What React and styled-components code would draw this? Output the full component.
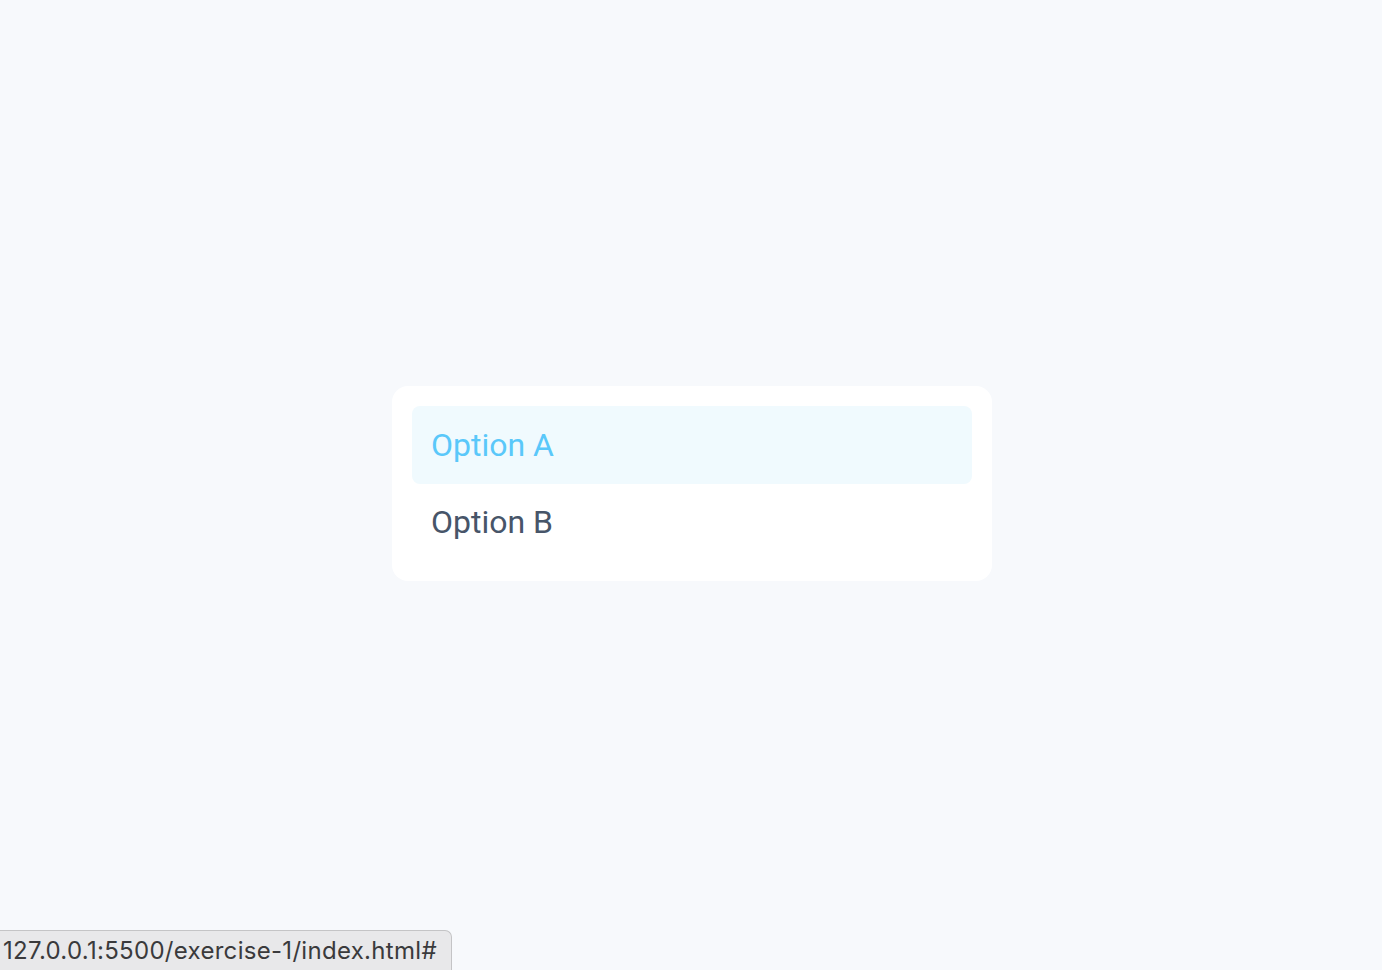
import styled, { createGlobalStyle } from "styled-components";

const GlobalStyle = createGlobalStyle`
  html, body {
    margin: 0;
    padding: 0;
    height: 100%;
    background: #f7f9fc;
    font-family: Roboto, "Noto Sans", sans-serif;
  }
  #root {
    height: 100%;
  }
`;

const Page = styled.div`
  min-height: 100vh;
  box-sizing: border-box;
  padding: 0 0 3px 2px;
  display: flex;
  align-items: center;
  justify-content: center;
`;

const Menu = styled.ul`
  list-style: none;
  margin: 0;
  width: 600px;
  box-sizing: border-box;
  padding: 20px;
  background: #fff;
  border-radius: 16px;
`;

const Item = styled.li`
  height: 77.5px;
  box-sizing: border-box;
  padding: 0 19px;
  display: flex;
  align-items: center;
  border-radius: 8px;
  font-size: 32px;
  cursor: pointer;
  color: ${(p) => (p.$active ? "#5ac8fa" : "#475569")};
  background: ${(p) => (p.$active ? "#f0fafe" : "transparent")};
  &:hover {
    background: #f0fafe;
    color: #5ac8fa;
  }
`;

/* browser status bubble shown while hovering a link */
const StatusBubble = styled.div`
  position: fixed;
  left: 0;
  bottom: 0;
  height: 39px;
  padding: 0 14px 0 3px;
  display: flex;
  align-items: center;
  background: #e8e8ea;
  border: 1px solid #c4c4c6;
  border-left: none;
  border-bottom: none;
  border-top-right-radius: 7px;
  color: #3a3a3c;
  font-family: Inter, "Noto Sans", sans-serif;
  font-size: 24px;
  letter-spacing: 0.3px;
`;

const options = ["Option A", "Option B"];

const App = () => {
  return (
    <>
      <GlobalStyle />
      <Page>
        <Menu>
          {options.map((option, index) => (
            <Item key={option} $active={index === 0}>
              {option}
            </Item>
          ))}
        </Menu>
      </Page>
      <StatusBubble>127.0.0.1:5500/exercise-1/index.html#</StatusBubble>
    </>
  );
};

export default App;
